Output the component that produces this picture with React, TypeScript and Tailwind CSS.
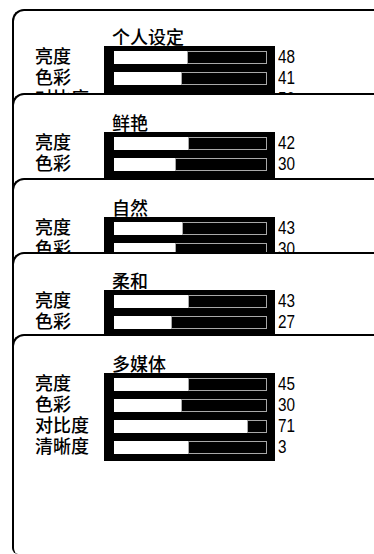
import React from "react";

type Row = { label: string; value: string; white: string };
type Card = { title: string; cls: string; pt: string; rows: Row[] };

const cards: Card[] = [
  {
    title: "个人设定",
    cls: "h-[96px] -mb-[12px] rounded-tl-[12px]",
    pt: "pt-[16px]",
    rows: [
      { label: "亮度", value: "48", white: "w-[73px]" },
      { label: "色彩", value: "41", white: "w-[67px]" },
      { label: "对比度", value: "50", white: "w-[73px]" },
    ],
  },
  {
    title: "鲜艳",
    cls: "h-[97px] -mb-[12px] rounded-tl-[12px]",
    pt: "pt-[18px]",
    rows: [
      { label: "亮度", value: "42", white: "w-[74px]" },
      { label: "色彩", value: "30", white: "w-[61px]" },
    ],
  },
  {
    title: "自然",
    cls: "h-[86px] -mb-[12px] rounded-tl-[12px]",
    pt: "pt-[18px]",
    rows: [
      { label: "亮度", value: "43", white: "w-[68px]" },
      { label: "色彩", value: "30", white: "w-[61px]" },
    ],
  },
  {
    title: "柔和",
    cls: "h-[94px] -mb-[12px] rounded-tl-[12px]",
    pt: "pt-[17px]",
    rows: [
      { label: "亮度", value: "43", white: "w-[74px]" },
      { label: "色彩", value: "27", white: "w-[57px]" },
    ],
  },
  {
    title: "多媒体",
    cls: "h-[220px] rounded-tl-[12px] rounded-bl-[6px]",
    pt: "pt-[18px]",
    rows: [
      { label: "亮度", value: "45", white: "w-[74px]" },
      { label: "色彩", value: "30", white: "w-[67px]" },
      { label: "对比度", value: "71", white: "w-[133px]" },
      { label: "清晰度", value: "3", white: "w-[74px]" },
    ],
  },
];

const cjk = "font-['Noto_Sans_CJK_SC','Noto_Sans',sans-serif]";

function Panel({ card }: { card: Card }) {
  return (
    <div
      className={`relative ml-[12px] w-[500px] border-l-2 border-t-2 border-black bg-white pl-[21px] ${card.cls} ${card.pt}`}
    >
      <div className={`${cjk} ml-[77px] mb-[1px] h-[18px] text-[18px] leading-[18px] font-medium text-black whitespace-nowrap`}>
        {card.title}
      </div>
      <div className="flex items-start">
        <div className="w-[69px] -mt-px flex flex-col">
          {card.rows.map((r) => (
            <div key={r.label} className={`${cjk} h-[21px] text-[18px] leading-[21px] font-medium text-black whitespace-nowrap`}>
              {r.label}
            </div>
          ))}
        </div>
        <div className="w-[171px] bg-black pt-[5px] pb-[7px] pl-[10px] pr-[8px] flex flex-col gap-[8px]">
          {card.rows.map((r) => (
            <div key={r.label} className="h-[13px] bg-white flex">
              <div className={`h-full shrink-0 ${r.white}`} />
              <div className="h-full flex-1 bg-black border border-[#a8a8a8]" />
            </div>
          ))}
        </div>
        <div className="ml-[3px] pt-[1px] flex flex-col">
          {card.rows.map((r) => (
            <div
              key={r.label}
              className="h-[21px] font-['Liberation_Sans',sans-serif] text-[18px] leading-[21px] text-black scale-x-[0.85] origin-left"
            >
              {r.value}
            </div>
          ))}
        </div>
      </div>
    </div>
  );
}

export default function App() {
  return (
    <div className="relative w-[374px] h-[554px] overflow-hidden bg-white pt-[9px]">
      {cards.map((c) => (
        <Panel key={c.title} card={c} />
      ))}
    </div>
  );
}
